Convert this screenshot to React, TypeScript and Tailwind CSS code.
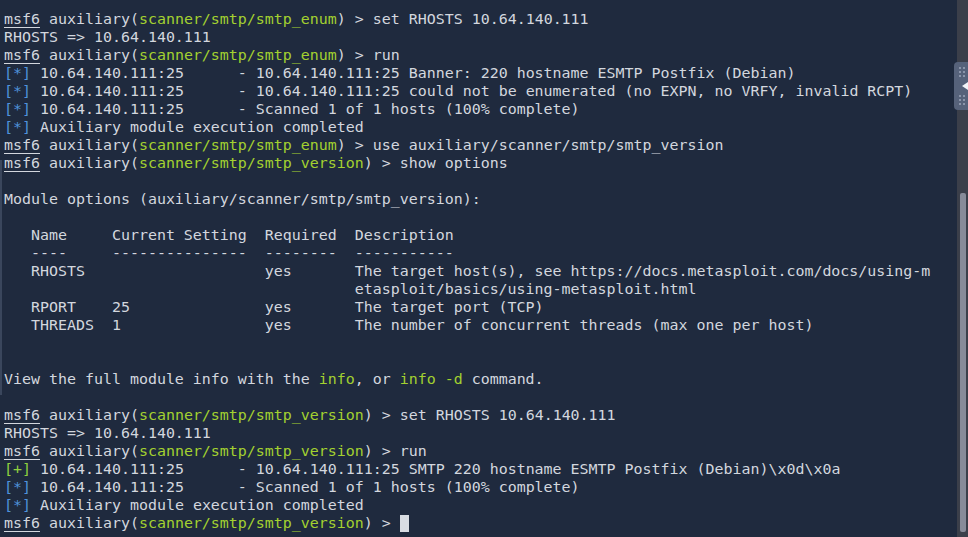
import React from 'react';

const G = 'text-[#a3d130]';
const B = 'text-[#4f92dc]';
const P = 'text-[#8fd13f]';

function Prompt({ mod, cmd, cursor }: { mod: string; cmd?: string; cursor?: boolean }) {
  return (
    <div>
      <span className="underline underline-offset-[3px] decoration-1">msf6</span> auxiliary(
      <span className={G}>{mod}</span>) &gt; {cmd}
      {cursor && <span className="inline-block w-[9px] h-[17px] bg-[#d8dce3] align-[-4px]" />}
    </div>
  );
}

function Star({ mark = '*', children }: { mark?: string; children: React.ReactNode }) {
  return (
    <div>
      <span className={mark === '+' ? P : B}>[{mark}]</span> {children}
    </div>
  );
}

const Blank = () => <div>&nbsp;</div>;

function Scrollbar() {
  return (
    <div className="relative w-[11px] h-full bg-[#3b3f4a] flex flex-col items-center pt-[193px] pb-[5px]">
      <div className="w-[6px] flex-1 bg-[#878b99] rounded-[2px]" />
      <div className="absolute top-[62px] right-0 w-[14px] h-[48px] bg-[#56627a] rounded-l-[4px] flex flex-col items-center justify-between py-[5px] pl-[2px]">
        <div className="grid grid-cols-2 gap-[2px]">
          {Array.from({ length: 6 }).map((_, i) => (
            <span key={i} className="w-[2px] h-[2px] bg-[#8b95aa]" />
          ))}
        </div>
        <svg width="6" height="8" viewBox="0 0 6 8" className="self-end">
          <path d="M6 0 L0 4 L6 8 Z" fill="#f2f4f8" />
        </svg>
        <div className="grid grid-cols-2 gap-[2px]">
          {Array.from({ length: 6 }).map((_, i) => (
            <span key={i} className="w-[2px] h-[2px] bg-[#8b95aa]" />
          ))}
        </div>
      </div>
    </div>
  );
}

export default function App() {
  return (
    <div className="relative w-[968px] h-[537px] overflow-hidden bg-[#1f2a3e] flex">
      <div className="absolute left-0 top-[160px] w-[2px] h-[235px] bg-[#3a465c]" />
      <div
        className="flex-1 pl-[4px] pt-[10px] text-[14.95px] leading-[18px] text-[#d3d7de] whitespace-pre"
        style={{ fontFamily: '"DejaVu Sans Mono", "Liberation Mono", monospace' }}
      >
        <Prompt mod="scanner/smtp/smtp_enum" cmd="set RHOSTS 10.64.140.111" />
        <div>RHOSTS =&gt; 10.64.140.111</div>
        <Prompt mod="scanner/smtp/smtp_enum" cmd="run" />
        <Star>10.64.140.111:25      - 10.64.140.111:25 Banner: 220 hostname ESMTP Postfix (Debian)</Star>
        <Star>10.64.140.111:25      - 10.64.140.111:25 could not be enumerated (no EXPN, no VRFY, invalid RCPT)</Star>
        <Star>10.64.140.111:25      - Scanned 1 of 1 hosts (100% complete)</Star>
        <Star>Auxiliary module execution completed</Star>
        <Prompt mod="scanner/smtp/smtp_enum" cmd="use auxiliary/scanner/smtp/smtp_version" />
        <Prompt mod="scanner/smtp/smtp_version" cmd="show options" />
        <Blank />
        <div>Module options (auxiliary/scanner/smtp/smtp_version):</div>
        <Blank />
        <div>   Name     Current Setting  Required  Description</div>
        <div>   ----     ---------------  --------  -----------</div>
        <div>   RHOSTS                    yes       The target host(s), see https://docs.metasploit.com/docs/using-m</div>
        <div>                                       etasploit/basics/using-metasploit.html</div>
        <div>   RPORT    25               yes       The target port (TCP)</div>
        <div>   THREADS  1                yes       The number of concurrent threads (max one per host)</div>
        <Blank />
        <Blank />
        <div>
          View the full module info with the <span className={G}>info</span>, or <span className={G}>info -d</span> command.
        </div>
        <Blank />
        <Prompt mod="scanner/smtp/smtp_version" cmd="set RHOSTS 10.64.140.111" />
        <div>RHOSTS =&gt; 10.64.140.111</div>
        <Prompt mod="scanner/smtp/smtp_version" cmd="run" />
        <Star mark="+">10.64.140.111:25      - 10.64.140.111:25 SMTP 220 hostname ESMTP Postfix (Debian)\x0d\x0a</Star>
        <Star>10.64.140.111:25      - Scanned 1 of 1 hosts (100% complete)</Star>
        <Star>Auxiliary module execution completed</Star>
        <Prompt mod="scanner/smtp/smtp_version" cursor />
      </div>
      <Scrollbar />
    </div>
  );
}
